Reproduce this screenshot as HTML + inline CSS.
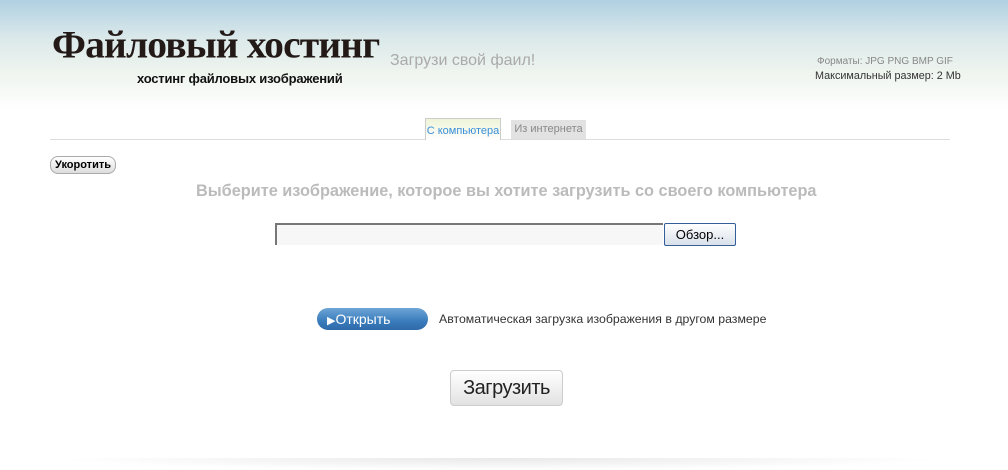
<!DOCTYPE html>
<html><head><meta charset="utf-8"><style>
body{margin:0;width:1008px;height:470px;overflow:hidden;background:#fff;font-family:"Liberation Sans",sans-serif;position:relative}
.hdr{position:absolute;left:0;top:0;width:1008px;height:110px;background:linear-gradient(#b0d0e2 0%,#dbe9ea 35%,#eef4ee 65%,#fff 100%)}
.a{position:absolute;white-space:nowrap}
</style></head><body>
<div class="hdr"></div>
<div class="a" style="left:52px;top:22px;font-family:'Liberation Serif',serif;font-weight:bold;font-size:46px;color:#231a18;letter-spacing:-1px;transform:scale(0.86,0.85);transform-origin:top left;">Файловый хостинг</div>
<div class="a" style="left:137px;top:71px;font-weight:bold;font-size:13px;letter-spacing:-0.2px;color:#111">хостинг файловых изображений</div>
<div class="a" style="left:390px;top:52px;font-size:16px;color:#aaa">Загрузи свой фаил!</div>
<div class="a" style="left:817px;top:56px;font-size:10px;color:#888">Форматы: JPG PNG BMP GIF</div>
<div class="a" style="left:815px;top:70px;font-size:10.8px;color:#333">Максимальный размер: 2 Mb</div>
<div class="a" style="left:50px;top:139px;width:900px;height:1px;background:#ddd"></div>
<div class="a" style="left:425px;top:118px;width:74px;height:21px;border:1px solid #ccc;border-bottom:none;background:linear-gradient(#eef4d8,#fff);font-size:11px;color:#3a8fd8;line-height:24px;text-align:center">С компьютера</div>
<div class="a" style="left:511px;top:120px;width:75px;height:19px;background:#e2e2e2;font-size:11px;color:#888;line-height:19px;text-align:center">Из интернета</div>
<div class="a" style="left:50px;top:156px;width:64px;height:16px;border:1px solid #aaa;border-radius:8px;background:linear-gradient(#fff,#ddd);font-size:11px;font-weight:bold;line-height:16px;text-align:center">Укоротить</div>
<div class="a" style="left:196px;top:182px;font-size:16.3px;font-weight:bold;color:#bbb">Выберите изображение, которое вы хотите загрузить со своего компьютера</div>
<div class="a" style="left:275px;top:223px;width:386px;height:20px;border-top:2px solid #777;border-left:2px solid #777;background:#f7f7f7"></div>
<div class="a" style="left:664px;top:223px;width:70px;height:21px;border:1px solid #335e9a;border-radius:2px;background:linear-gradient(#fff,#d8e0ea);font-size:13px;line-height:21px;text-align:center">Обзор...</div>
<div class="a" style="left:317px;top:308px;width:111px;height:22px;border-radius:11px;background:linear-gradient(#6ea5d6,#3a7cbc 60%,#2f6aa8);color:#fff;font-size:14px;line-height:22px"><span style="margin-left:10px;font-size:11px">▶</span>Открыть</div>
<div class="a" style="left:439px;top:312px;font-size:12.3px;color:#333">Автоматическая загрузка изображения в другом размере</div>
<div class="a" style="left:450px;top:370px;width:111px;height:34px;border:1px solid #ccc;border-radius:4px;background:linear-gradient(#fff,#e2e2e2);font-size:20px;letter-spacing:-0.5px;color:#222;line-height:34px;text-align:center">Загрузить</div>
<div class="a" style="left:50px;top:458px;width:900px;height:12px;background:radial-gradient(ellipse at 50% 0%,#e8e8e8,#fff 70%)"></div>
</body></html>
